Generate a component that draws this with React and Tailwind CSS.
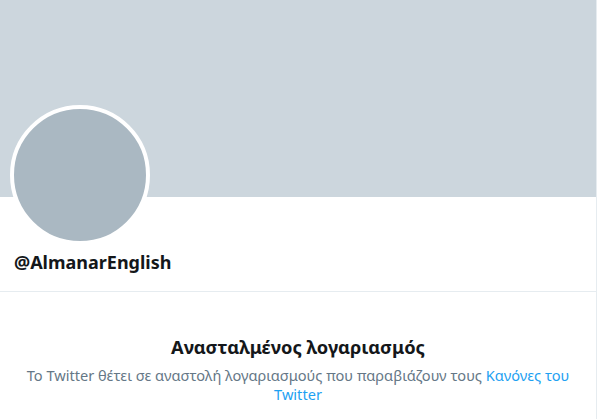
export default function App() {
  return (
    <div className="w-[613px] h-[419px] bg-white overflow-hidden" style={{ fontFamily: '"Noto Sans", "Open Sans", sans-serif' }}>
      <div className="w-[597px] h-[419px] border-r border-[#E6ECF0]">
        <div className="h-[197px] bg-[#CCD6DD]" />
        <div className="px-[10px]">
          <div className="-mt-[92px] w-[140px] h-[140px] rounded-full border-4 border-white bg-[#AAB8C2] relative" />
        </div>
        <div className="h-[47px] px-[14px] pt-[5px] border-b border-[#E6ECF0]">
          <div className="text-[18px] leading-[24px] font-bold text-[#14171A]">@AlmanarEnglish</div>
        </div>
        <div className="pt-[42px] text-center px-4">
          <div className="text-[18.3px] leading-[26px] font-bold text-[#14171A]">Ανασταλμένος λογαριασμός</div>
          <div className="mt-[6px] text-[14.6px] leading-[19px] text-[#657786]">
            Το Twitter θέτει σε αναστολή λογαριασμούς που παραβιάζουν τους <span className="text-[#1DA1F2]">Κανόνες του Twitter</span>
          </div>
        </div>
      </div>
    </div>
  );
}
